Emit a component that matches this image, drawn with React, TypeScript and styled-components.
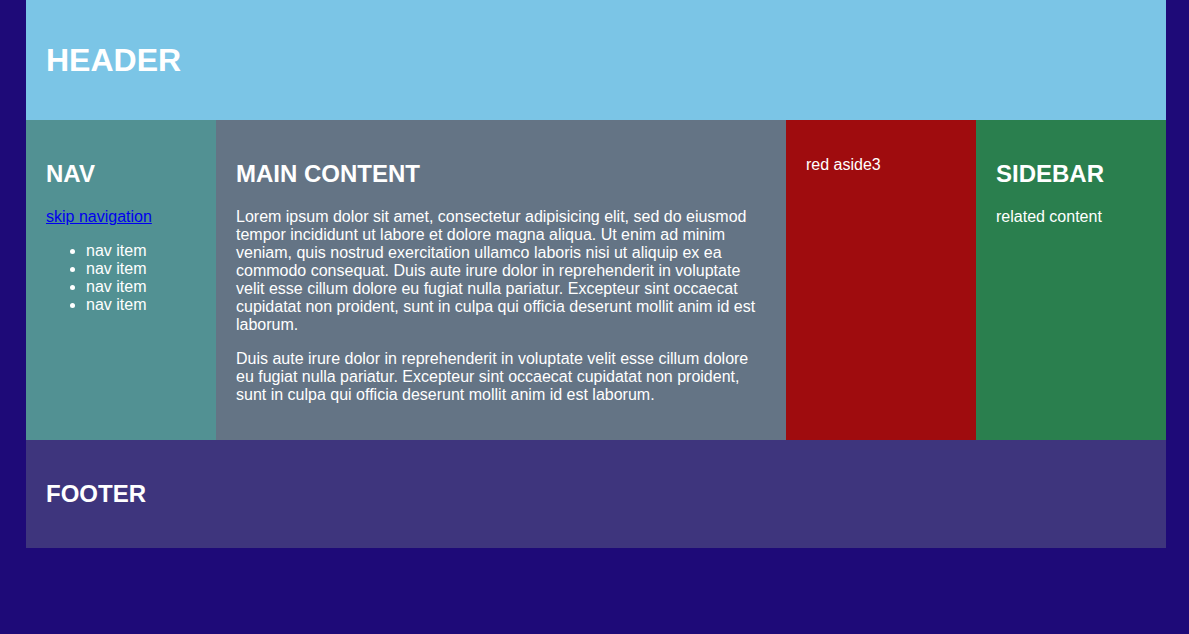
import React from "react";
import styled, { createGlobalStyle } from "styled-components";

const Global = createGlobalStyle`
  html, body { margin: 0; padding: 0; background: #1e0a78; }
  body {
    font-family: "Liberation Sans", Arial, Helvetica, sans-serif;
    font-size: 16px;
    line-height: 18px;
    color: #ffffff;
  }
`;

const Page = styled.div`
  width: 1140px;
  margin: 0 0 0 26px;
  display: flex;
  flex-direction: column;
`;

const Header = styled.header`
  background: #7bc5e6;
  padding: 20px;
  height: 120px;
  box-sizing: border-box;
  display: flex;
  align-items: center;
`;

const H1 = styled.h1`
  margin: 0;
  font-size: 32px;
  line-height: 37px;
  font-weight: bold;
`;

const H2 = styled.h2`
  margin: 20px 0;
  font-size: 24px;
  line-height: 28px;
  font-weight: bold;
`;

const Row = styled.div`
  display: flex;
  align-items: stretch;
`;

const Column = styled.section<{ $bg: string; $w: number }>`
  background: ${(p) => p.$bg};
  width: ${(p) => p.$w}px;
  flex: none;
  box-sizing: border-box;
  padding: 20px;
`;

const P = styled.p`
  margin: 16px 0;
`;

const SkipLink = styled.a`
  color: #0000ee;
  text-decoration: underline;
`;

const NavList = styled.ul`
  margin: 16px 0;
  padding-left: 40px;
  list-style: disc;
`;

const Footer = styled.footer`
  background: #3e357d;
  padding: 20px;
  height: 108px;
  box-sizing: border-box;
`;

export default function App() {
  return (
    <>
      <Global />
      <Page>
        <Header>
          <H1>HEADER</H1>
        </Header>
        <Row>
          <Column $bg="#529193" $w={190}>
            <H2>NAV</H2>
            <P>
              <SkipLink href="#main">skip navigation</SkipLink>
            </P>
            <NavList>
              <li>nav item</li>
              <li>nav item</li>
              <li>nav item</li>
              <li>nav item</li>
            </NavList>
          </Column>
          <Column $bg="#647485" $w={570} id="main">
            <H2>MAIN CONTENT</H2>
            <P>
              Lorem ipsum dolor sit amet, consectetur adipisicing elit, sed do eiusmod
              tempor incididunt ut labore et dolore magna aliqua. Ut enim ad minim
              veniam, quis nostrud exercitation ullamco laboris nisi ut aliquip ex ea
              commodo consequat. Duis aute irure dolor in reprehenderit in voluptate
              velit esse cillum dolore eu fugiat nulla pariatur. Excepteur sint occaecat
              cupidatat non proident, sunt in culpa qui officia deserunt mollit anim id est
              laborum.
            </P>
            <P>
              Duis aute irure dolor in reprehenderit in voluptate velit esse cillum dolore
              eu fugiat nulla pariatur. Excepteur sint occaecat cupidatat non proident,
              sunt in culpa qui officia deserunt mollit anim id est laborum.
            </P>
          </Column>
          <Column $bg="#9f0c0e" $w={190}>
            <P>red aside3</P>
          </Column>
          <Column $bg="#2a7f4e" $w={190}>
            <H2>SIDEBAR</H2>
            <P>related content</P>
          </Column>
        </Row>
        <Footer>
          <H2>FOOTER</H2>
        </Footer>
      </Page>
    </>
  );
}
